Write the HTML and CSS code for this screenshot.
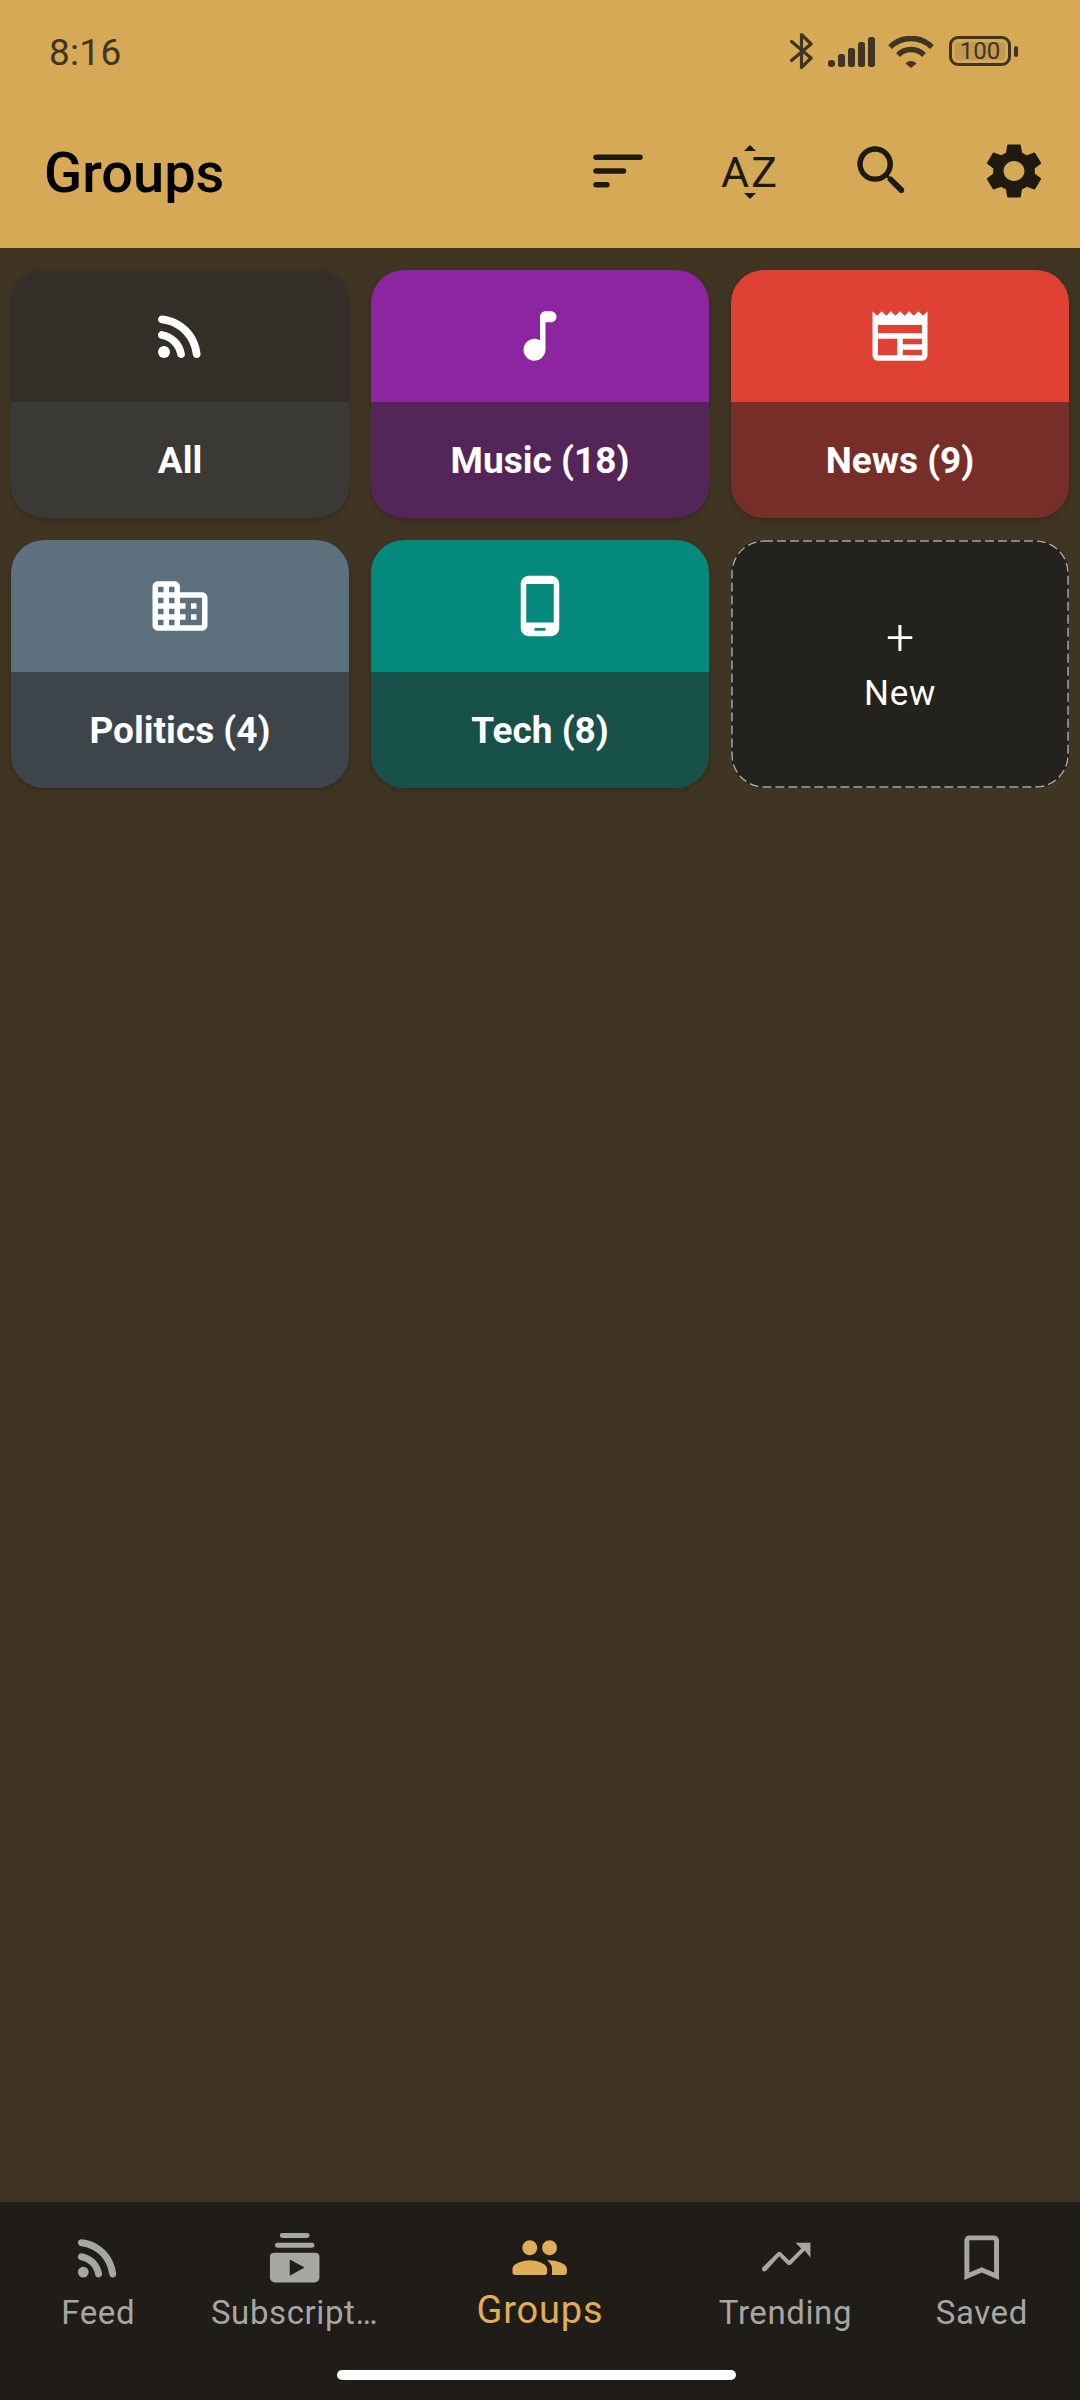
FILE: index.html
```html
<!DOCTYPE html>
<html lang="en">
<head>
<meta charset="utf-8">
<title>Groups</title>
<link rel="stylesheet" href="styles.css">
</head>
<body>
<div class="app">
  <header class="header">
    <div class="status">
      <span class="time">8:16</span>
      <div class="status-icons">
        <svg class="si-bt" viewBox="0 0 23 38" width="23" height="38"><path class="bt-line" d="M1.500 9.500L21 26 11.500 35.500V2.500L21 12 1.500 28.500"/></svg>
        <svg class="si-sig" viewBox="0 0 47 30" width="47" height="30"><rect x="0" y="23" width="7" height="7" rx="3"/><rect x="10" y="17" width="7" height="13" rx="2.5"/><rect x="20" y="11" width="7" height="19" rx="2.5"/><rect x="30" y="5" width="7" height="25" rx="2.5"/><rect x="40" y="0" width="7" height="30" rx="2.5"/></svg>
        <svg class="si-wifi" viewBox="0 0 46 32" width="46" height="32"><path class="wifi-arc" d="M2.1 11.1A29.5 29.5 0 0 1 43.9 11.1"/><path class="wifi-arc" d="M10 19A18.400 18.400 0 0 1 36 19"/><path d="M17.500 27.500A7.500 7.500 0 0 1 28.500 27.500L23 32z"/></svg>
        <div class="battery">
          <div class="battery-body"><span class="battery-fill">100</span></div>
          <i class="battery-nub"></i>
        </div>
      </div>
    </div>
    <div class="toolbar">
      <h1 class="title">Groups</h1>
      <div class="actions">
        <svg class="ic" viewBox="0 0 24 24"><rect x="3" y="6" width="18" height="2" rx="1"/><rect x="3" y="11" width="12" height="2" rx="1"/><rect x="3" y="16" width="6" height="2" rx="1"/></svg>
        <div class="ic az"><i class="tri tri-up"></i><span class="az-text">AZ</span><i class="tri tri-down"></i></div>
        <svg class="ic" viewBox="0 0 24 24"><path d="M15.5 14h-.79l-.28-.27c1.2-1.4 1.82-3.31 1.48-5.34-.47-2.78-2.79-5-5.59-5.34-4.2-.52-7.74 3.01-7.22 7.21.34 2.8 2.56 5.12 5.34 5.59 2.03.34 3.94-.28 5.34-1.48l.27.28v.79l4.25 4.25c.41.41 1.08.41 1.49 0 .41-.41.41-1.08 0-1.49L15.5 14zm-6 0C7.01 14 5 11.99 5 9.5S7.01 5 9.5 5 14 7.01 14 9.5 11.99 14 9.5 14z"/></svg>
        <svg class="ic" viewBox="0.62 0 22.76 24" preserveAspectRatio="none"><path d="M19.14 12.94c.04-.3.06-.61.06-.94 0-.32-.02-.64-.07-.94l2.03-1.58c.18-.14.23-.41.12-.61l-1.92-3.32c-.12-.22-.37-.29-.59-.22l-2.39.96c-.5-.38-1.03-.7-1.62-.94l-.36-2.54c-.04-.24-.24-.41-.48-.41h-3.84c-.24 0-.43.17-.47.41l-.36 2.54c-.59.24-1.13.57-1.62.94l-2.39-.96c-.22-.08-.47 0-.59.22L2.74 8.87c-.12.21-.08.47.12.61l2.03 1.58c-.05.3-.09.63-.09.94s.02.64.07.94l-2.03 1.58c-.18.14-.23.41-.12.61l1.92 3.32c.12.22.37.29.59.22l2.39-.96c.5.38 1.03.7 1.62.94l.36 2.54c.05.24.24.41.48.41h3.84c.24 0 .44-.17.47-.41l.36-2.54c.59-.24 1.13-.56 1.62-.94l2.39.96c.22.08.47 0 .59-.22l1.92-3.32c.12-.22.07-.47-.12-.61l-2.01-1.58zM12 15.600c-1.980 0-3.600-1.620-3.600-3.600s1.620-3.600 3.600-3.600 3.600 1.620 3.600 3.600-1.620 3.600-3.600 3.600z"/></svg>
      </div>
    </div>
  </header>

  <main class="grid">
    <article class="card all">
      <div class="card-top"><svg class="ic" viewBox="0 0 24 24"><circle cx="6.18" cy="17.82" r="2.18"/><path d="M5.59 10.23c-.84-.14-1.59.55-1.59 1.4 0 .71.53 1.28 1.23 1.4 2.92.51 5.22 2.82 5.74 5.74.12.7.69 1.23 1.4 1.23.85 0 1.54-.75 1.41-1.59-.68-4.2-3.99-7.51-8.19-8.18zm-.03-5.71C4.73 4.43 4 5.1 4 5.93c0 .73.55 1.33 1.27 1.4 6.01.6 10.79 5.38 11.39 11.39.07.73.67 1.28 1.4 1.28.84 0 1.5-.73 1.42-1.56-.73-7.34-6.57-13.19-13.92-13.92z"/></svg></div>
      <div class="card-label">All</div>
    </article>
    <article class="card music">
      <div class="card-top"><svg class="ic" viewBox="0 0 24 24"><path d="M12 5v8.55c-.94-.54-2.1-.75-3.33-.32-1.34.48-2.37 1.67-2.61 3.07-.46 2.74 1.86 5.08 4.59 4.65 1.96-.31 3.35-2.11 3.35-4.1V7h2c1.1 0 2-.9 2-2s-.9-2-2-2h-2c-1.1 0-2 .9-2 2z"/></svg></div>
      <div class="card-label">Music (18)</div>
    </article>
    <article class="card news">
      <div class="card-top"><svg class="ic" viewBox="0 0 24 24"><path d="M22 3l-1.67 1.67L18.67 3 17 4.67 15.33 3l-1.66 1.67L12 3l-1.67 1.67L8.67 3 7 4.67 5.33 3 3.67 4.67 2 3v16c0 1.1.9 2 2 2h16c1.1 0 2-.9 2-2V3zM11 19H4v-6h7v6zm9 0h-7v-2h7v2zm0-4h-7v-2h7v2zm0-4H4V8h16v3z"/></svg></div>
      <div class="card-label">News (9)</div>
    </article>
    <article class="card politics">
      <div class="card-top"><svg class="ic" viewBox="0 0 24 24"><path fill-rule="evenodd" d="M12 7V5c0-1.100-.9-2-2-2H4c-1.100 0-2 .9-2 2v14c0 1.100.9 2 2 2h16c1.100 0 2-.9 2-2V9c0-1.100-.9-2-2-2h-8zM6 19H4v-2h2v2zm0-4H4v-2h2v2zm0-4H4V9h2v2zm0-4H4V5h2v2zm4 12H8v-2h2v2zm0-4H8v-2h2v2zm0-4H8V9h2v2zm0-4H8V5h2v2zm10 12h-8v-2h2v-2h-2v-2h2v-2h-2V9h8v10zm-2-8h-2v2h2v-2zm0 4h-2v2h2v-2z"/></svg></div>
      <div class="card-label">Politics (4)</div>
    </article>
    <article class="card tech">
      <div class="card-top"><svg class="ic" viewBox="0 0 24 24"><path d="M16 1H8C6.340 1 5 2.340 5 4v16c0 1.660 1.340 3 3 3h8c1.660 0 3-1.340 3-3V4c0-1.660-1.340-3-3-3zm-2 20h-4v-1h4v1zm3-3H7V4h10v14z"/></svg></div>
      <div class="card-label">Tech (8)</div>
    </article>
    <article class="card new">
      <svg class="dash" viewBox="0 0 338 248" width="338" height="248"><rect x="1" y="1" width="336" height="246" rx="32" ry="32"/></svg>
      <span class="new-plus">+</span>
      <span class="new-label">New</span>
    </article>
  </main>

  <nav class="nav">
    <div class="tabs">
      <div class="tab">
        <svg class="nav-ic" viewBox="0 0 24 24"><circle cx="6.18" cy="17.82" r="2.18"/><path d="M5.59 10.23c-.84-.14-1.59.55-1.59 1.4 0 .71.53 1.28 1.23 1.4 2.92.51 5.22 2.82 5.74 5.74.12.7.69 1.23 1.4 1.23.85 0 1.54-.75 1.41-1.59-.68-4.2-3.99-7.51-8.19-8.18zm-.03-5.71C4.73 4.43 4 5.1 4 5.93c0 .73.55 1.33 1.27 1.4 6.01.6 10.79 5.38 11.39 11.39.07.73.67 1.28 1.4 1.28.84 0 1.5-.73 1.42-1.56-.73-7.34-6.57-13.19-13.92-13.92z"/></svg>
        <span class="tab-label">Feed</span>
      </div>
      <div class="tab">
        <svg class="nav-ic" viewBox="0 0 24 24"><rect x="6" y="2" width="12" height="2" rx="1"/><rect x="4" y="6" width="16" height="2" rx="1"/><path fill-rule="evenodd" d="M4 10h16c1.100 0 2 .4 2 1.500V20c0 1.100-.9 2-2 2H4c-1.100 0-2-.9-2-2v-8.500C2 10.400 2.900 10 4 10zm12 6l-6-3.270v6.530z"/></svg>
        <span class="tab-label">Subscript…</span>
      </div>
      <div class="tab tab-active">
        <svg class="nav-ic" viewBox="0 0 24 24"><path d="M16 11c1.660 0 2.990-1.340 2.990-3S17.660 5 16 5s-3 1.340-3 3 1.340 3 3 3zm-8 0c1.660 0 2.990-1.340 2.990-3S9.660 5 8 5 5 6.340 5 8s1.340 3 3 3zm0 2c-2.330 0-7 1.170-7 3.500V18c0 .55.45 1 1 1h12c.55 0 1-.45 1-1v-1.500c0-2.330-4.670-3.500-7-3.500zm8 0c-.29 0-.62.02-.97.05.02.01.03.03.04.04 1.140.83 1.930 1.940 1.930 3.410V18c0 .35-.07.69-.18 1H22c.55 0 1-.45 1-1v-1.500c0-2.330-4.670-3.500-7-3.500z"/></svg>
        <span class="tab-label">Groups</span>
      </div>
      <div class="tab">
        <svg class="nav-ic" viewBox="0 0 24 24"><path d="M16 6l2.290 2.290-4.880 4.880-3.290-3.290c-.39-.39-1.020-.39-1.410 0l-6 6.010c-.39.39-.39 1.020 0 1.410.39.39 1.020.39 1.410 0L9.410 11.410l3.290 3.290c.39.39 1.020.39 1.410 0l5.590-5.580L22 12V6z"/></svg>
        <span class="tab-label">Trending</span>
      </div>
      <div class="tab">
        <svg class="nav-ic" viewBox="0 0 24 24"><path d="M17 3H7c-1.100 0-1.990.9-1.990 2L5 21l7-3 7 3V5c0-1.100-.9-2-2-2zm0 15l-5-2.180L7 18V5h10v13z"/></svg>
        <span class="tab-label">Saved</span>
      </div>
    </div>
    <div class="home-bar"></div>
  </nav>
</div>
</body>
</html>
```

FILE: styles.css
```css
* { box-sizing: border-box; margin: 0; padding: 0; }

html, body { width: 1080px; height: 2400px; overflow: hidden; }

body {
  background: #403523;
  font-family: Roboto, "Liberation Sans", sans-serif;
}

.app {
  display: flex;
  flex-direction: column;
  height: 2400px;
}

/* Header */
.header {
  height: 248px;
  background: #d6a956;
  display: flex;
  flex-direction: column;
}

.status {
  height: 104px;
  padding: 0 62px 0 49px;
  display: flex;
  align-items: flex-start;
  justify-content: space-between;
  color: #403523;
}

.time {
  margin-top: 31px;
  font-size: 37px;
  line-height: 44px;
  letter-spacing: .3px;
}

.status-icons {
  margin-top: 32px;
  height: 38px;
  display: flex;
  align-items: center;
  fill: #403523;
}

.si-bt { margin-right: 15px; }
.si-sig { margin-right: 13px; margin-top: 2px; }
.si-wifi { margin-right: 15px; margin-top: 2px; }

.bt-line {
  fill: none;
  stroke: #403523;
  stroke-width: 3.2;
  stroke-linejoin: round;
  stroke-linecap: round;
}

.wifi-arc {
  fill: none;
  stroke: #403523;
  stroke-width: 5.5;
}

.battery {
  display: flex;
  align-items: center;
}

.battery-body {
  width: 62px;
  height: 30px;
  border: 3px solid #403523;
  border-radius: 9px;
  padding: 3px;
  display: flex;
}

.battery-fill {
  flex: 1;
  background: #c29a51;
  border-radius: 3px;
  font-size: 24px;
  line-height: 18px;
  text-align: center;
  color: #403523;
}

.battery-nub {
  width: 4px;
  height: 11px;
  margin-left: 3px;
  background: #403523;
  border-radius: 2px;
}

.toolbar {
  flex: 1;
  display: flex;
  align-items: flex-start;
  padding-left: 44px;
}

.title {
  margin-top: 39px;
  font-size: 56px;
  line-height: 60px;
  font-weight: 500;
  color: #000;
  flex: 1;
}

.actions {
  display: flex;
  margin-top: 34px;
  margin-right: 33px;
  gap: 66px;
  fill: #1f1a10;
}

.ic { width: 66px; height: 66px; display: block; }

.az {
  display: flex;
  flex-direction: column;
  align-items: center;
  justify-content: center;
  padding-top: 2px;
  color: #1f1a10;
}

.az-text {
  font-size: 43px;
  line-height: 42px;
  font-weight: 400;
  letter-spacing: 2px;
}

.tri {
  width: 0;
  height: 0;
  border-left: 6px solid transparent;
  border-right: 6px solid transparent;
}
.tri-up { border-bottom: 6px solid #1f1a10; }
.tri-down { border-top: 6px solid #1f1a10; }

/* Grid */
.grid {
  flex: 1;
  padding: 22px 11px;
  display: grid;
  grid-template-columns: repeat(3, 338px);
  grid-auto-rows: 248px;
  gap: 22px;
  align-content: start;
}

.card {
  border-radius: 33px;
  overflow: hidden;
  display: flex;
  flex-direction: column;
  box-shadow: 0 2px 5px rgba(0, 0, 0, .22);
  color: #fff;
  fill: #fff;
}

.card-top {
  height: 132px;
  display: flex;
  align-items: center;
  justify-content: center;
}

.card-label {
  flex: 1;
  display: flex;
  align-items: center;
  justify-content: center;
  font-size: 37px;
  font-weight: 700;
}

.all .card-top { background: #332e28; }
.all .card-label { background: #3a3935; }
.music .card-top { background: #8e25a0; }
.music .card-label { background: #532558; }
.news .card-top { background: #e04135; }
.news .card-label { background: #782e28; }
.politics .card-top { background: #5c717d; }
.politics .card-label { background: #3d454b; }
.tech .card-top { background: #05897c; }
.tech .card-label { background: #18514a; }

.new {
  position: relative;
  background: #24221d;
  align-items: center;
  justify-content: center;
  box-shadow: none;
}

.dash {
  position: absolute;
  inset: 0;
  fill: none;
  stroke: #a9a7a2;
  stroke-width: 1.5;
  stroke-dasharray: 9 4;
}

.new-plus {
  font-size: 50px;
  line-height: 52px;
  font-weight: 300;
  margin-top: -2px;
}

.new-label {
  font-size: 35px;
  line-height: 42px;
  letter-spacing: .7px;
  margin-top: 10px;
}

/* Bottom navigation */
.nav {
  height: 198px;
  background: #201c17;
  display: flex;
  flex-direction: column;
  align-items: center;
}

.tabs {
  display: flex;
  width: 100%;
  height: 168px;
}

.tab {
  flex: 1;
  display: flex;
  flex-direction: column;
  align-items: center;
  padding-top: 26px;
  color: #a6a6a3;
  fill: #a6a6a3;
}

.tab-active {
  flex: 1.5;
  color: #e0ad58;
  fill: #e0ad58;
}

.nav-ic { width: 59.4px; height: 59.4px; display: block; }

.tab-label {
  font-size: 33px;
  line-height: 40px;
  letter-spacing: .6px;
  margin-top: 6px;
  white-space: nowrap;
}

.tab-active .tab-label {
  font-size: 38px;
  letter-spacing: .8px;
  margin-top: 3px;
}

.home-bar {
  width: 399px;
  height: 10px;
  margin-right: 7px;
  background: #fff;
  border-radius: 5px;
}
```
